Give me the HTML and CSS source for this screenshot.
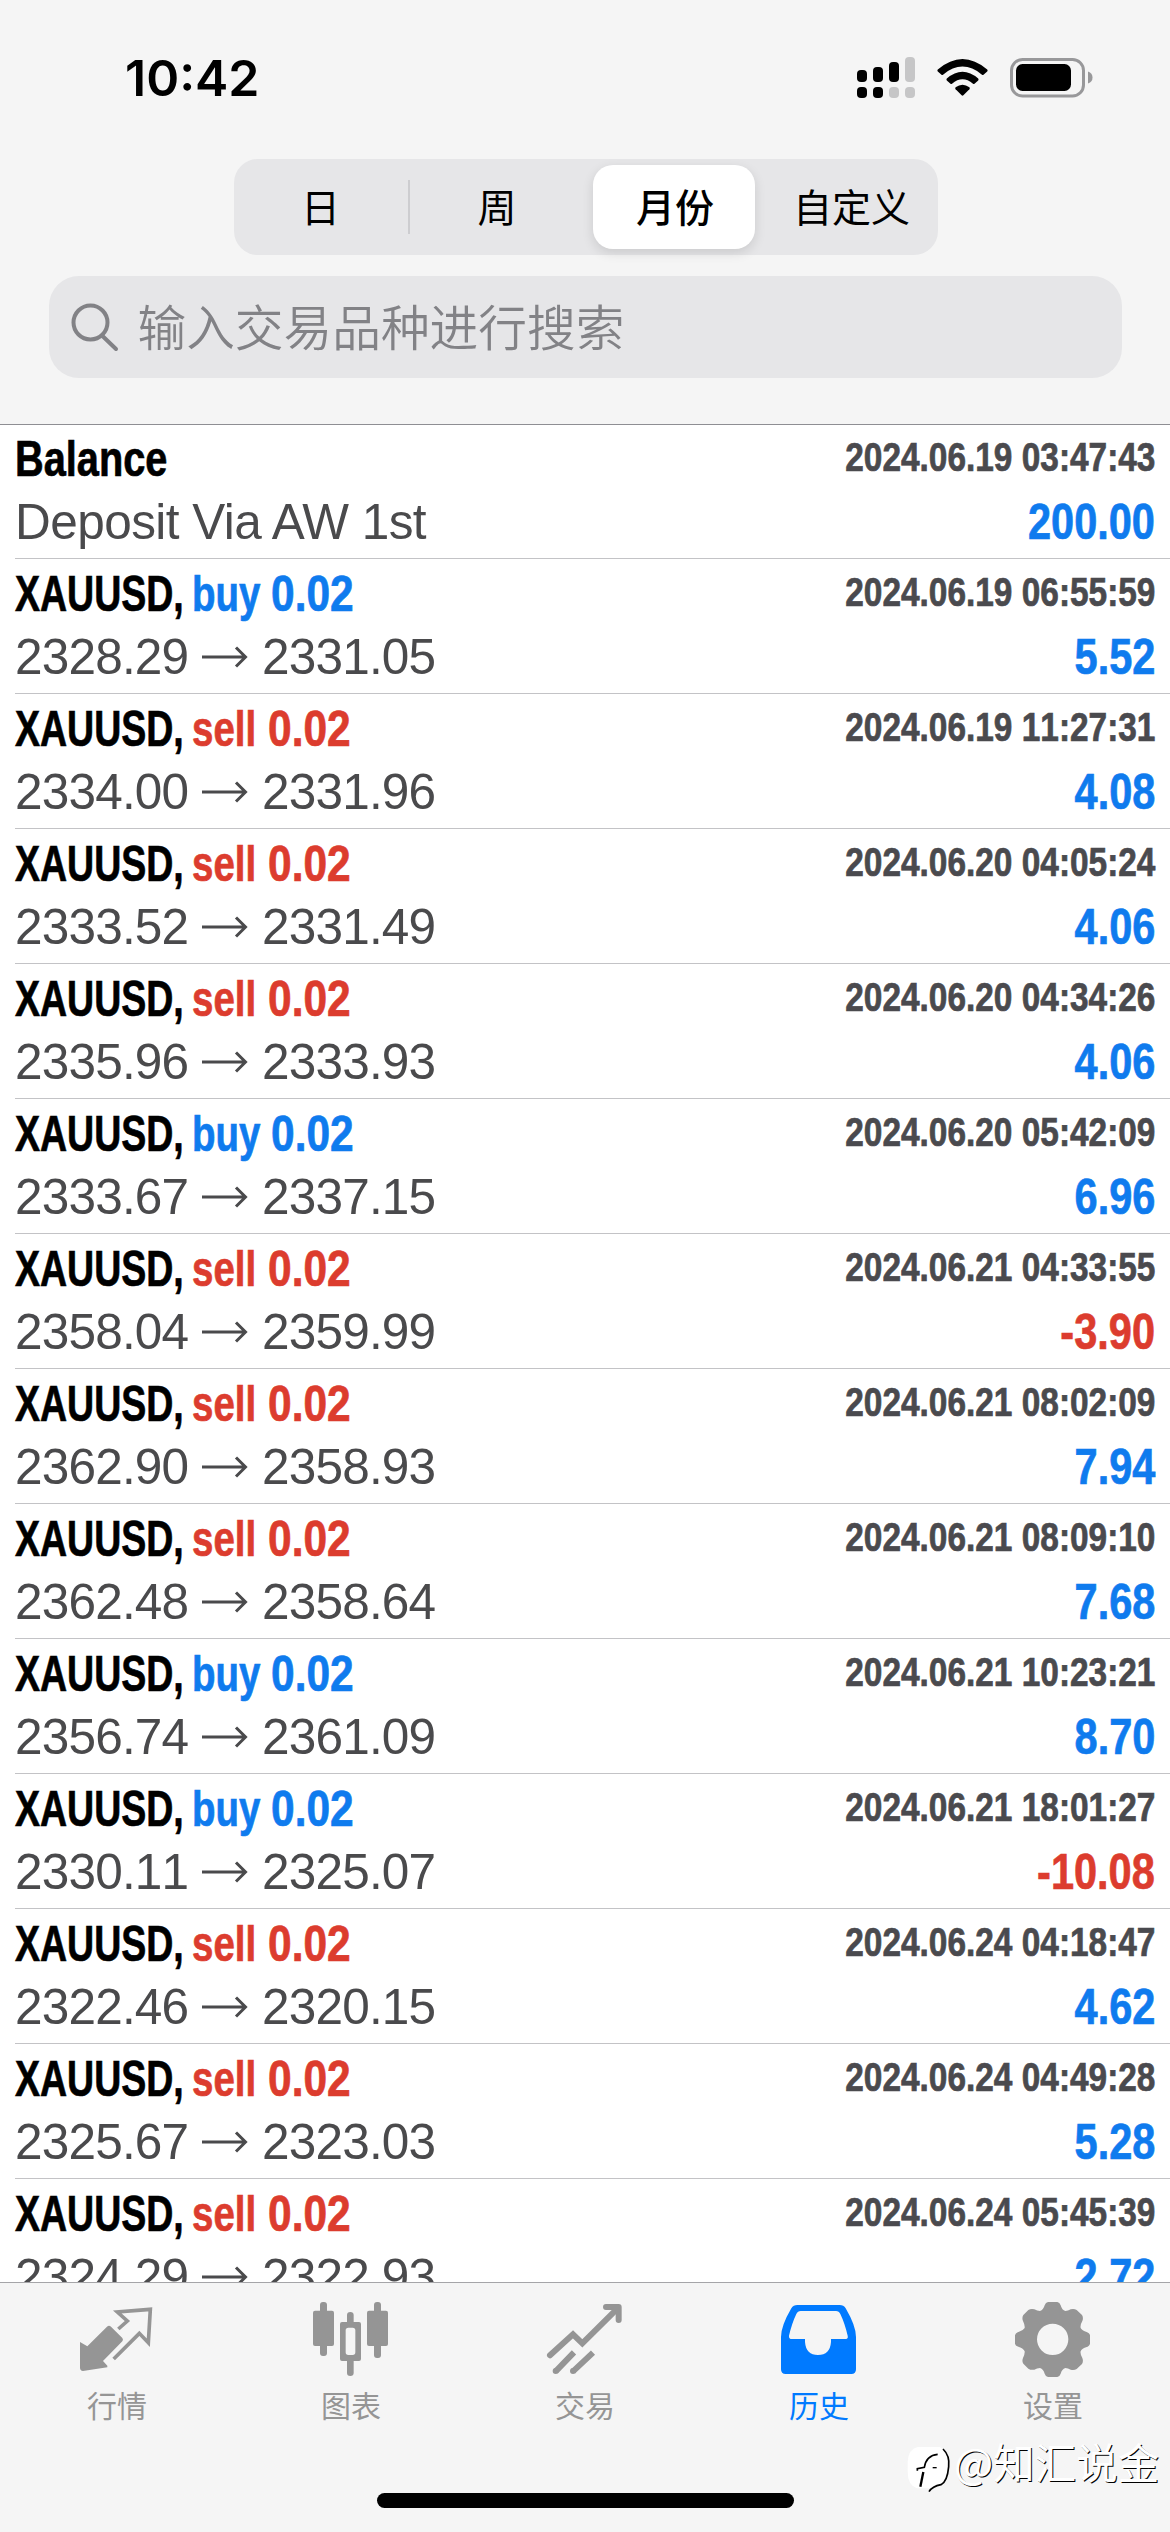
FILE: index.html
```
<!DOCTYPE html>
<html lang="zh-CN">
<head>
<meta charset="utf-8">
<title>历史</title>
<link rel="stylesheet" href="styles.css">
</head>
<body>
<div class="app">
  <header class="top">
    <div class="status">
      <span class="clock">10:42</span>
      <svg class="status-icons" width="240" height="48" viewBox="855 54 240 48">
        <rect x="856" y="70" width="10" height="12" rx="4"/>
        <rect x="872" y="67" width="10" height="15" rx="4"/>
        <rect x="888" y="62" width="10" height="20" rx="4"/>
        <rect x="904" y="57" width="10" height="25" rx="4" fill="#c6c6c7"/>
        <rect x="856" y="87" width="10" height="11" rx="4"/>
        <rect x="872" y="87" width="10" height="11" rx="4"/>
        <rect x="888" y="87" width="10" height="11" rx="4" fill="#c6c6c7"/>
        <rect x="904" y="87" width="10" height="11" rx="4" fill="#c6c6c7"/>
        <path d="M936.8 69.5Q961.500 48.500 986.200 69.500Q987 70.500 986.200 71.500L982.500 74.700Q981.700 75.300 981 74.700Q961.500 58.500 942 74.700Q941.300 75.300 940.500 74.700L936.800 71.500Q936 70.500 936.800 69.500Z"/>
        <path d="M945.800 78.500Q961.500 65 977.200 78.500Q978 79.500 977.200 80.500L973.500 83.700Q972.700 84.300 972 83.700Q961.500 75 951 83.700Q950.300 84.300 949.500 83.700L945.800 80.500Q945 79.500 945.800 78.500Z"/>
        <path d="M954.600 87.300Q961.500 82 968.400 87.300Q969.300 88.300 968.400 89.300L962.400 95.300Q961.500 96.200 960.600 95.300L954.600 89.300Q953.700 88.300 954.600 87.300Z"/>
        <rect x="1010.500" y="59.500" width="72" height="36.500" rx="11" fill="none" stroke="#98989a" stroke-width="3"/>
        <rect x="1015" y="64" width="55" height="27" rx="6.500"/>
        <path d="M1087 71.500Q1091.500 73 1091.500 77.500T1087 83.500Z" fill="#98989a"/>
      </svg>
    </div>
    <nav class="segments">
      <span class="segment day">日</span>
      <span class="segment week">周</span>
      <span class="segment month"><b class="pill">月份</b></span>
      <span class="segment custom">自定义</span>
    </nav>
    <div class="search">
      <svg class="lens" width="50" height="50" viewBox="0 0 50 50"><circle cx="20.500" cy="20.500" r="17" /><path d="M32.500 34L46 47"/></svg>
      <span class="hint">输入交易品种进行搜索</span>
    </div>
  </header>
  <main class="list" id="list"></main>
  <footer class="tabs">
    <a class="tab">
      <svg width="78" height="78" viewBox="234 180 234 234">
        <path d="M240 306L262 319L321 260Q327 255 333 260L367 294Q371 299 367 304L309 363L322 377V382L249 393Q240 392 240 383Z"/>
        <path d="M355 267L382 243L352 216L451 208L445 308L418 280L341 357" fill="none" stroke="#959595" stroke-width="11"/>
      </svg><span>行情</span></a>
    <a class="tab">
      <svg width="78" height="78" viewBox="936 180 234 234">
        <rect x="939" y="212" width="63" height="106" rx="6"/><rect x="960" y="186" width="21" height="162" rx="9"/>
        <rect x="1101" y="212" width="63" height="106" rx="6"/><rect x="1122" y="186" width="21" height="168" rx="9"/>
        <path fill-rule="evenodd" d="M1026 246H1077Q1083 246 1083 252V357Q1083 363 1077 363H1026Q1020 363 1020 357V252Q1020 246 1026 246ZM1045 263Q1037 263 1037 271V337Q1037 345 1045 345H1058Q1066 345 1066 337V271Q1066 263 1058 263Z"/>
        <path d="M1041 248V225Q1041 216 1051 216T1061 225V248ZM1041 360V399Q1041 408 1051 408T1061 399V360Z"/>
      </svg><span>图表</span></a>
    <a class="tab">
      <svg width="78" height="78" viewBox="438 180 234 234">
        <g fill="none" stroke="#959595" stroke-width="18" stroke-linecap="round" stroke-linejoin="miter"><path d="M450 346L519 283L547 310L652 206"/><path d="M618 201H656V240" stroke-linejoin="round"/></g>
        <path d="M467 394L522 337M519 394L579 338" stroke="#959595" stroke-width="18"/><circle cx="467" cy="393" r="9"/><circle cx="519" cy="393" r="9"/>
      </svg><span>交易</span></a>
    <a class="tab active">
      <svg width="78" height="78" viewBox="90 180 234 234">
        <path fill-rule="evenodd" d="M142 195H269Q281 195 287 205Q318 258 318 291V388Q318 402 304 402H107Q93 402 93 388V291Q93 258 124 205Q130 195 142 195ZM152 213Q143 213 139 222Q126 249 117 287Q116 297 126 297H165V306Q168 345 204 345T243 306V297H284Q296 297 293 287Q284 249 271 222Q267 213 258 213Z"/>
      </svg><span>历史</span></a>
    <a class="tab">
      <svg width="78" height="78" viewBox="792 180 234 234">
        <path fill-rule="evenodd" d="M894 186H922Q929 187 932 196Q936 211 946 213Q954 213 962 208Q972 205 980 210L996 225Q1001 233 997 243Q990 255 992 264Q995 271 1008 275Q1019 279 1020 286V311Q1019 318 1008 322Q995 326 992 334Q990 342 997 354Q1001 364 996 372L980 387Q972 392 962 389Q954 384 946 384Q936 387 932 401Q929 410 922 411H894Q887 410 884 401Q880 387 870 384Q861 384 853 389Q843 391 835 386L820 371Q815 364 819 354Q825 342 824 334Q820 325 807 321Q796 318 795 311V286Q796 279 807 275Q820 271 824 264Q825 255 819 243Q815 233 820 225L835 210Q843 205 853 208Q862 213 870 213Q880 210 884 196Q887 187 894 186ZM908 251A47 47 0 1 0 908 345A47 47 0 1 0 908 251Z"/>
      </svg><span>设置</span></a>
    <div class="home"></div>
    <div class="watermark">
      <svg width="44" height="48" viewBox="20 30 132 144"><path d="M52 36H118Q146 48 146 90Q146 140 112 152L88 160H50Q22 150 22 110V80Q24 42 52 36Z" fill="#fff"/><g fill="none" stroke="#000"><path d="M51 107V101L72 97Q78 61 112 58" stroke-width="5"/><path d="M69 111L60 155" stroke-width="7"/><path d="M97 98H109" stroke-width="4"/><path d="M128 42Q149 62 145 95Q141 140 122 149Q96 154 86 170" stroke-width="5"/></g></svg>
      <span class="handle">@知汇说金</span>
    </div>
  </footer>
</div>
<script src="rows.js"></script>
</body>
</html>
```
FILE: rows.js
```
const trades = [
  ["buy", "2328.29", "2331.05", "2024.06.19 06:55:59", "5.52"],
  ["sell", "2334.00", "2331.96", "2024.06.19 11:27:31", "4.08"],
  ["sell", "2333.52", "2331.49", "2024.06.20 04:05:24", "4.06"],
  ["sell", "2335.96", "2333.93", "2024.06.20 04:34:26", "4.06"],
  ["buy", "2333.67", "2337.15", "2024.06.20 05:42:09", "6.96"],
  ["sell", "2358.04", "2359.99", "2024.06.21 04:33:55", "-3.90"],
  ["sell", "2362.90", "2358.93", "2024.06.21 08:02:09", "7.94"],
  ["sell", "2362.48", "2358.64", "2024.06.21 08:09:10", "7.68"],
  ["buy", "2356.74", "2361.09", "2024.06.21 10:23:21", "8.70"],
  ["buy", "2330.11", "2325.07", "2024.06.21 18:01:27", "-10.08"],
  ["sell", "2322.46", "2320.15", "2024.06.24 04:18:47", "4.62"],
  ["sell", "2325.67", "2323.03", "2024.06.24 04:49:28", "5.28"],
  ["sell", "2324.29", "2322.93", "2024.06.24 05:45:39", "2.72"]
];
const arrow = '<svg class="arrow" width="46" height="22" viewBox="0 0 46 22"><path d="M0 11H43M34 1.500L43.500 11L34 20.500"/></svg>';
const row = (title, detail, date, profit) =>
  `<article class="row"><div class="line"><span class="title">${title}</span><time class="date">${date}</time></div>` +
  `<div class="line"><span class="detail">${detail}</span><span class="profit ${profit[0] === "-" ? "loss" : ""}">${profit}</span></div></article>`;
document.getElementById("list").innerHTML =
  row('<span class="balance">Balance</span>', '<span class="note">Deposit Via AW 1st</span>', "2024.06.19 03:47:43", "200.00") +
  trades.map(([side, open, close, date, profit]) =>
    row(`<span class="symbol">XAUUSD,</span><span class="side ${side}">${side}</span><span class="lot ${side}">0.02</span>`,
      `<span class="price">${open}</span>${arrow}<span class="price">${close}</span>`, date, profit)).join("");
```
FILE: styles.css
```
* { box-sizing: border-box; }
body { margin: 0; background: #fff; font-family: "Liberation Sans", "Noto Sans CJK SC", sans-serif; }
.app { width: 1170px; height: 2532px; display: flex; flex-direction: column; overflow: hidden; }
.top { height: 425px; flex: none; background: #f5f5f5; border-bottom: 1px solid #8e8e93; display: flex; flex-direction: column; align-items: center; }
.status { width: 1170px; height: 159px; padding: 54px 74px 0 125px; display: flex; justify-content: space-between; align-items: flex-start; }
.clock { font: 600 50px/48px Inter, sans-serif; }
.segments { width: 704px; height: 96px; margin-left: 2px; border-radius: 24px; background: #e6e6e8; display: flex; font: 400 39px/92px "Noto Sans CJK SC", sans-serif; }
.segment { display: flex; justify-content: center; }
.day { width: 173px; }
.week { width: 180px; background: linear-gradient(#cdcdd0, #cdcdd0) left 1px center / 2px 54px no-repeat; }
.month { width: 178px; }
.custom { width: 173px; }
.pill { width: 162px; height: 84px; margin: 6px 4px 0 0; padding-left: 2px; line-height: 80px; border-radius: 20px; background: #fff; text-align: center; font-weight: 500; box-shadow: 0 4px 12px rgba(0, 0, 0, .12); }
.search { width: 1073px; height: 102px; margin-top: 21px; border-radius: 30px; background: #e6e6e8; display: flex; align-items: center; gap: 18px; padding-left: 21px; color: #828286; font: 350 48.700px/98px "Noto Sans CJK SC", sans-serif; }
.hint { height: 102px; }
.lens { fill: none; stroke: #828286; stroke-width: 4; stroke-linecap: round; }
.list { flex: 1; min-height: 0; overflow: hidden; margin-top: -1px; }
.row { height: 135px; margin-left: 15px; padding: 3px 15px 0 0; border-bottom: 1px solid #c3c3c6; }
.line { height: 63px; display: flex; justify-content: space-between; font-size: 50px; line-height: 64px; white-space: nowrap; font-kerning: none; }
.title, .date, .profit { font-weight: 700; -webkit-text-stroke-width: .7px; }
.title { display: flex; }
.title span { flex: none; transform-origin: left; }
.balance { transform: scaleX(.795); }
.symbol { width: 177px; transform: scaleX(.75); }
.side { transform: scaleX(.77); }
.side.buy { width: 79px; }
.side.sell { width: 76px; }
.lot { transform: scaleX(.85); }
.buy { color: #0f7bee; }
.sell { color: #dc3c2e; }
.date { color: #4a4a4e; font-size: 40px; line-height: 61px; transform: scaleX(.835); transform-origin: right; }
.detail { display: flex; align-items: center; color: #4a4a4c; font-size: 49.500px; letter-spacing: -0.800px; }
.note { font-kerning: normal; letter-spacing: -0.550px; }
.price { width: 171px; }
.price:last-child { margin-left: 14px; }
.profit { color: #0f7bee; transform: scaleX(.83); transform-origin: right; }
.loss { color: #dc3c2e; }
.arrow { margin-left: 16px; fill: none; stroke: #4a4a4c; stroke-width: 3; }
.tabs { position: relative; height: 250px; flex: none; background: #f5f5f5; border-top: 1px solid #a5a5a8; display: flex; }
.tab { width: 234px; padding-top: 17px; display: flex; flex-direction: column; align-items: center; color: #959595; font: 400 30px/40px "Noto Sans CJK SC", sans-serif; }
.tab svg { fill: #959595; margin-bottom: 6px; }
.active { color: #007aff; }
.tab.active svg { fill: #007aff; }
.home { position: absolute; left: 377px; top: 210px; width: 417px; height: 15px; border-radius: 8px; background: #000; }
.watermark { position: absolute; left: 907px; top: 162px; display: flex; align-items: flex-start; gap: 3px; color: #fff; font: 400 41.500px/32px "Noto Sans CJK SC", sans-serif; text-shadow: 1px 1px 0 #000; }
```
